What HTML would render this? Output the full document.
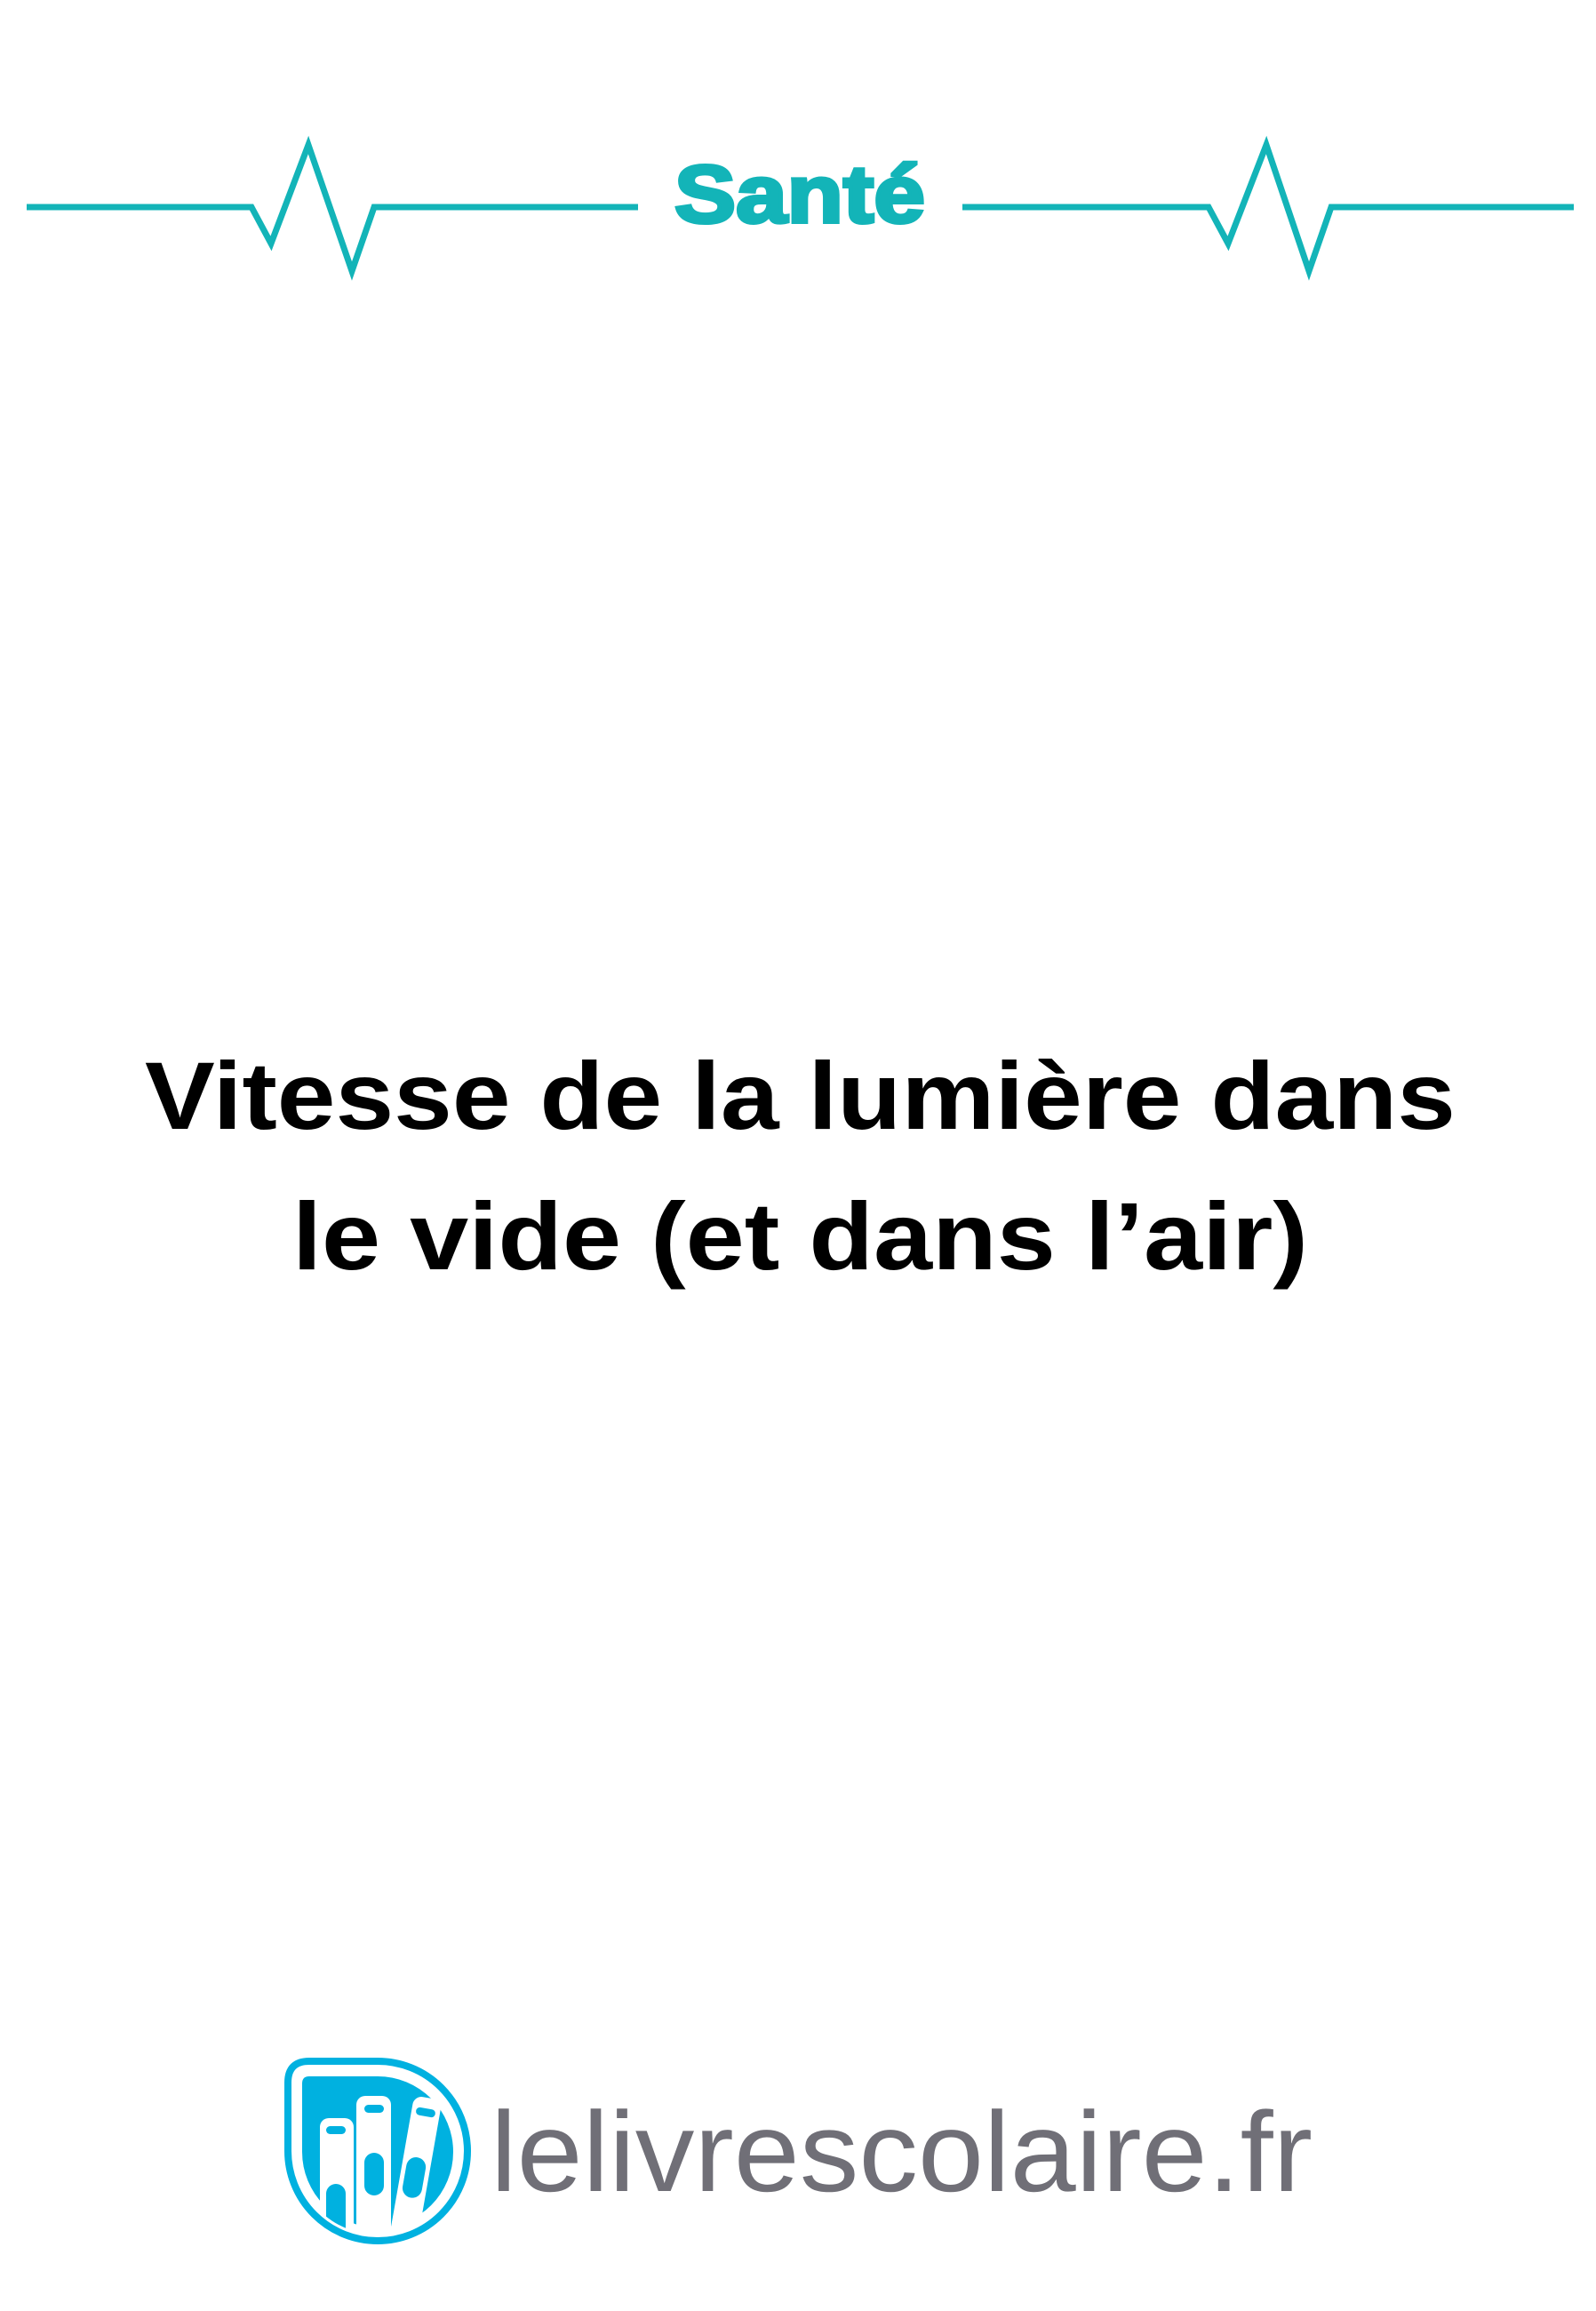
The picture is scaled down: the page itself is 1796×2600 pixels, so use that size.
<!DOCTYPE html>
<html><head><meta charset="utf-8"><style>
html,body{margin:0;padding:0;background:#fff;}
svg{display:block;}
</style></head><body>
<svg width="1796" height="2600" viewBox="0 0 1796 2600" xmlns="http://www.w3.org/2000/svg">
<defs>
<clipPath id="c"><circle cx="425" cy="2421" r="93"/></clipPath>
</defs>
<rect width="1796" height="2600" fill="#fff"/>
<g fill="none" stroke="#13b4b8" stroke-width="7" stroke-linejoin="miter">
<polyline points="30,233 283,233 305,274 347,163 396,305 421,233 718,233"/>
<polyline points="1083,233 1360,233 1382,274 1425,163 1473,305 1498,233 1771,233"/>
</g>
<text x="900" y="250" text-anchor="middle" font-family="Liberation Sans, sans-serif" font-weight="bold" font-size="92" fill="#13b4b8" stroke="#13b4b8" stroke-width="4" textLength="282" lengthAdjust="spacingAndGlyphs">Santé</text>
<text x="163" y="1270" font-family="Liberation Sans, sans-serif" font-weight="bold" font-size="108" fill="#000" textLength="1475" lengthAdjust="spacingAndGlyphs">Vitesse de la lumière dans</text>
<text x="329" y="1428" font-family="Liberation Sans, sans-serif" font-weight="bold" font-size="108" fill="#000" textLength="1143" lengthAdjust="spacingAndGlyphs">le vide (et dans l’air)</text>
<!-- logo icon -->
<path d="M324,2343 Q324,2319 348,2319 L425,2319 A101,101 0 1,1 324,2420 Z" fill="none" stroke="#00b1e0" stroke-width="8"/>
<path d="M340,2344 Q340,2336 348,2336 L425,2336 A85,85 0 1,1 340,2421 Z" fill="#00b1e0"/>
<g clip-path="url(#c)">
<rect x="360" y="2383" width="38" height="160" rx="10" fill="#fff"/>
<rect x="401" y="2358" width="39" height="180" rx="10" fill="#fff"/>
<g transform="rotate(10 480 2365)">
<rect x="465" y="2360" width="32" height="180" rx="10" fill="#fff"/>
<rect x="470" y="2372" width="22" height="9" rx="4.5" fill="#00b1e0"/>
<rect x="470" y="2428" width="22" height="46" rx="11" fill="#00b1e0"/>
</g>
<rect x="367" y="2392" width="22" height="9" rx="4.5" fill="#00b1e0"/>
<rect x="367" y="2457" width="22" height="60" rx="11" fill="#00b1e0"/>
<rect x="410" y="2368" width="22" height="9" rx="4.5" fill="#00b1e0"/>
<rect x="410" y="2422" width="22" height="48" rx="11" fill="#00b1e0"/>
</g>
<text x="552" y="2465" font-family="Liberation Sans, sans-serif" font-size="128" fill="#706f77" textLength="925" lengthAdjust="spacingAndGlyphs">lelivrescolaire.fr</text>
</svg>
</body></html>
